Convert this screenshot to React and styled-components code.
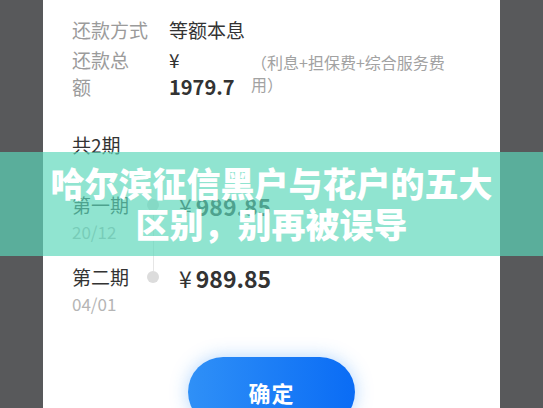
import React from 'react';
import styled, { createGlobalStyle } from 'styled-components';

const GlobalStyle = createGlobalStyle`
  html, body {
    margin: 0;
    padding: 0;
    background: #58595b;
    overflow: hidden;
  }
  body {
    font-family: "Noto Sans CJK SC", "Noto Sans", sans-serif;
  }
`;

const Page = styled.div`
  position: relative;
  width: 543px;
  height: 408px;
  display: flex;
  justify-content: center;
  overflow: hidden;
`;

const Card = styled.div`
  width: 457px;
  height: 408px;
  box-sizing: border-box;
  background: #fff;
  padding: 17px 29px 0;
  display: flex;
  flex-direction: column;
  overflow: hidden;
`;

const InfoRow = styled.div`
  display: grid;
  grid-template-columns: 97px 82px 200px;
  margin-top: ${p => p.$gap || 0}px;
  font-size: 19px;
  line-height: ${p => p.$lh || 26}px;
`;

const Label = styled.div`
  color: #9b9b9b;
  white-space: nowrap;
`;

const Value = styled.div`
  color: #333;
  white-space: nowrap;
`;

const Total = styled.div`
  color: #333;
  font-size: 20px;
  font-weight: 700;
`;

const Note = styled.div`
  color: #a2a2a2;
  font-size: 16px;
  line-height: 22px;
  padding-top: 5px;
`;

const Heading = styled.div`
  margin-top: 32px;
  font-size: 19px;
  line-height: 26px;
  color: #333;
`;

const Timeline = styled.div`
  margin-top: 33px;
  display: flex;
  flex-direction: column;
`;

const Period = styled.div`
  display: flex;
  align-items: stretch;
`;

const PeriodText = styled.div`
  width: 75px;
  padding-bottom: 18px;
`;

const PeriodName = styled.div`
  font-size: 19px;
  line-height: 28px;
  color: #333;
`;

const PeriodDate = styled.div`
  font-size: 17px;
  line-height: 26px;
  color: #b5b5b5;
`;

const Track = styled.div`
  width: 12px;
  display: flex;
  flex-direction: column;
  align-items: center;
`;

const Segment = styled.div`
  width: 1px;
  background: ${p => (p.$hidden ? 'transparent' : '#e6e6e6')};
  height: ${p => (p.$grow ? 'auto' : '8px')};
  flex: ${p => (p.$grow ? 1 : 'none')};
`;

const Dot = styled.div`
  width: 12px;
  height: 12px;
  border-radius: 50%;
  background: #dcdcdc;
`;

const Amount = styled.div`
  padding-left: 20px;
  font-size: 23px;
  line-height: 30px;
  font-weight: 700;
  color: #333;
  white-space: nowrap;
`;

const Currency = styled.span`
  font-weight: 400;
  margin-right: 4px;
`;

const ButtonWrap = styled.div`
  margin-top: 22px;
  display: flex;
  justify-content: center;
`;

const Confirm = styled.button`
  width: 167px;
  height: 70px;
  border: none;
  border-radius: 35px;
  background: linear-gradient(90deg, #2f90f7 0%, #0a6cf5 100%);
  box-shadow: 0 0 18px rgba(40, 140, 250, 0.35);
  color: #fff;
  font-family: inherit;
  font-size: 22px;
  font-weight: 700;
  letter-spacing: 1px;
`;

const Banner = styled.div`
  position: absolute;
  left: 0;
  right: 0;
  top: 152px;
  height: 104px;
  background: rgba(91, 215, 185, 0.68);
  display: flex;
  align-items: center;
  justify-content: center;
`;

const BannerTitle = styled.div`
  color: #fff;
  font-size: 34px;
  font-weight: 900;
  line-height: 41px;
  text-align: center;
  width: 450px;
  margin-top: -2px;
`;

const periods = [
  { name: '第一期', date: '20/12', amount: '989.85' },
  { name: '第二期', date: '04/01', amount: '989.85' },
];

export default function App() {
  return (
    <Page>
      <GlobalStyle />
      <Card>
        <InfoRow>
          <Label>还款方式</Label>
          <Value>等额本息</Value>
        </InfoRow>
        <InfoRow $gap={3} $lh={27}>
          <Label>
            还款总
            <br />
            额
          </Label>
          <div>
            <Value>¥</Value>
            <Total>1979.7</Total>
          </div>
          <Note>（利息+担保费+综合服务费用）</Note>
        </InfoRow>

        <Heading>共2期</Heading>

        <Timeline>
          {periods.map((p, i) => (
            <Period key={p.name}>
              <PeriodText>
                <PeriodName>{p.name}</PeriodName>
                <PeriodDate>{p.date}</PeriodDate>
              </PeriodText>
              <Track>
                <Segment $hidden={i === 0} />
                <Dot />
                <Segment $grow $hidden={i === periods.length - 1} />
              </Track>
              <Amount>
                <Currency>¥</Currency>
                {p.amount}
              </Amount>
            </Period>
          ))}
        </Timeline>

        <ButtonWrap>
          <Confirm type="button">确定</Confirm>
        </ButtonWrap>
      </Card>

      <Banner>
        <BannerTitle>哈尔滨征信黑户与花户的五大区别，别再被误导</BannerTitle>
      </Banner>
    </Page>
  );
}
